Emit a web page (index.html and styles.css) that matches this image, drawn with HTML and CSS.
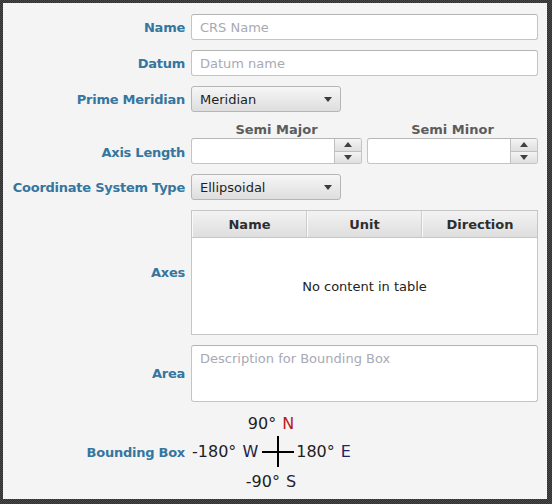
FILE: index.html
```html
<!DOCTYPE html>
<html>
<head>
<meta charset="utf-8">
<link rel="stylesheet" href="styles.css">
</head>
<body>
<div class="panel">
  <div class="form">
    <div class="lbl">Name</div>
    <div class="tf"><span class="ph">CRS Name</span></div>

    <div class="lbl">Datum</div>
    <div class="tf"><span class="ph">Datum name</span></div>

    <div class="lbl">Prime Meridian</div>
    <div class="combo"><span class="combo-text">Meridian</span><span class="arrow"></span></div>

    <div class="lbl lbl-axis">Axis Length</div>
    <div class="axis">
      <div class="spin-col">
        <div class="spin-h">Semi Major</div>
        <div class="spinner">
          <div class="spin-field"></div>
          <div class="spin-btns">
            <div class="sb"><span class="tri-up"></span></div>
            <div class="sb"><span class="tri-down"></span></div>
          </div>
        </div>
      </div>
      <div class="spin-col">
        <div class="spin-h">Semi Minor</div>
        <div class="spinner">
          <div class="spin-field"></div>
          <div class="spin-btns">
            <div class="sb"><span class="tri-up"></span></div>
            <div class="sb"><span class="tri-down"></span></div>
          </div>
        </div>
      </div>
    </div>

    <div class="lbl">Coordinate System Type</div>
    <div class="combo"><span class="combo-text">Ellipsoidal</span><span class="arrow"></span></div>

    <div class="lbl">Axes</div>
    <div class="table">
      <div class="thead">
        <div class="th">Name</div>
        <div class="th">Unit</div>
        <div class="th">Direction</div>
      </div>
      <div class="tbody">No content in table</div>
    </div>

    <div class="lbl">Area</div>
    <div class="ta"><span class="ph">Description for Bounding Box</span></div>

    <div class="lbl">Bounding Box</div>
    <div class="compass">
      <div class="c-top">90° <span class="n">N</span></div>
      <div class="c-mid">
        <span class="c-w">-180° <span class="w">W</span></span>
        <span class="cross"><span class="cross-h"></span><span class="cross-v"></span></span>
        <span class="c-e">180° <span class="e">E</span></span>
      </div>
      <div class="c-bot">-90° <span class="s">S</span></div>
    </div>
  </div>
</div>
</body>
</html>
```

FILE: styles.css
```css
html, body {
  margin: 0;
  padding: 0;
}

body {
  width: 552px;
  height: 504px;
  background: repeating-conic-gradient(#2f2f2f 0 25%, #4a4a4a 0 50%) 0 0 / 2px 2px;
  font-family: "DejaVu Sans", "Liberation Sans", sans-serif;
  font-size: 13px;
  color: #222;
  overflow: hidden;
}

.panel {
  margin: 3px 0 0 3px;
  width: 544px;
  height: 496px;
  background: #f4f4f4;
  box-sizing: border-box;
}

.form {
  display: grid;
  grid-template-columns: 182px 347px;
  grid-template-rows: 26px 26px 26px 42px 26px 125px 57px 80px;
  column-gap: 6px;
  row-gap: 10px;
  padding: 11px 9px 0 0;
}

.lbl {
  display: flex;
  align-items: center;
  justify-content: flex-end;
  font-weight: bold;
  color: #3576a0;
  white-space: nowrap;
  letter-spacing: -0.25px;
}

.lbl-axis {
  align-items: flex-end;
  padding-bottom: 4px;
}

.tf {
  background: #fff;
  border: 1px solid #c4c4c4;
  border-top-color: #b4b4b4;
  border-radius: 3px;
  box-sizing: border-box;
  display: flex;
  align-items: center;
  padding-left: 8px;
}

.ph {
  color: #a9a9b4;
}

.combo {
  width: 150px;
  box-sizing: border-box;
  border: 1px solid #b6b6b6;
  border-radius: 3px;
  background: linear-gradient(#f6f6f6, #dedede);
  display: flex;
  align-items: center;
  justify-content: space-between;
  padding: 0 8px 0 8px;
}

.combo-text {
  color: #1e1e1e;
}

.arrow {
  width: 0;
  height: 0;
  border-left: 4.5px solid transparent;
  border-right: 4.5px solid transparent;
  border-top: 5px solid #3a3a3a;
}

.axis {
  display: flex;
  gap: 5px;
}

.spin-col {
  width: 171px;
  display: flex;
  flex-direction: column;
}

.spin-h {
  height: 16px;
  line-height: 16px;
  text-align: center;
  font-weight: bold;
  color: #5c5c5c;
}

.spinner {
  height: 26px;
  box-sizing: border-box;
  border: 1px solid #c4c4c4;
  border-top-color: #b6b6b6;
  border-radius: 3px;
  display: flex;
  background: #fff;
  overflow: hidden;
}

.spin-field {
  flex: 1;
}

.spin-btns {
  width: 26px;
  display: flex;
  flex-direction: column;
  border-left: 1px solid #c0c0c0;
}

.sb {
  flex: 1;
  background: linear-gradient(#f4f4f4, #dfdfdf);
  display: flex;
  align-items: center;
  justify-content: center;
}

.sb + .sb {
  border-top: 1px solid #c0c0c0;
}

.tri-up {
  width: 0;
  height: 0;
  border-left: 4.5px solid transparent;
  border-right: 4.5px solid transparent;
  border-bottom: 5px solid #404040;
}

.tri-down {
  width: 0;
  height: 0;
  border-left: 4.5px solid transparent;
  border-right: 4.5px solid transparent;
  border-top: 5px solid #404040;
}

.table {
  border: 1px solid #c6c6c6;
  background: #fff;
  display: flex;
  flex-direction: column;
  box-sizing: border-box;
}

.thead {
  height: 26px;
  display: grid;
  grid-template-columns: 1fr 1fr 1fr;
  background: linear-gradient(#f3f3f3, #dedede);
  border-bottom: 1px solid #c6c6c6;
}

.th {
  display: flex;
  align-items: center;
  justify-content: center;
  font-weight: bold;
  color: #2e2e2e;
  border-left: 1px solid #fafafa;
  border-right: 1px solid #cdcdcd;
}

.th:last-child {
  border-right: none;
}

.tbody {
  flex: 1;
  display: flex;
  align-items: center;
  justify-content: center;
  color: #222;
}

.ta {
  background: #fff;
  border: 1px solid #c4c4c4;
  border-top-color: #b4b4b4;
  border-radius: 3px;
  box-sizing: border-box;
  padding: 5px 8px;
  line-height: 16px;
}

.compass {
  width: fit-content;
  font-size: 16px;
  color: #1e1e1e;
  display: flex;
  flex-direction: column;
  word-spacing: 1px;
}

.c-top, .c-bot {
  text-align: center;
  height: 23px;
  line-height: 23px;
  white-space: nowrap;
}

.c-bot {
  padding-top: 3px;
}

.c-mid {
  height: 31px;
  display: flex;
  align-items: center;
  white-space: nowrap;
  padding-left: 1px;
  padding-top: 1px;
}

.cross {
  position: relative;
  width: 32px;
  height: 31px;
  margin: 0 2px 0 4px;
}

.cross-h {
  position: absolute;
  left: 0;
  right: 0;
  top: 15px;
  height: 2px;
  background: #000;
}

.cross-v {
  position: absolute;
  top: 0;
  bottom: 0;
  left: 15px;
  width: 2px;
  background: #000;
}

.n {
  color: #b81a1a;
}

.e {
  color: #222266;
}

.w {
  color: #222244;
}

.s {
  color: #222233;
}
```
